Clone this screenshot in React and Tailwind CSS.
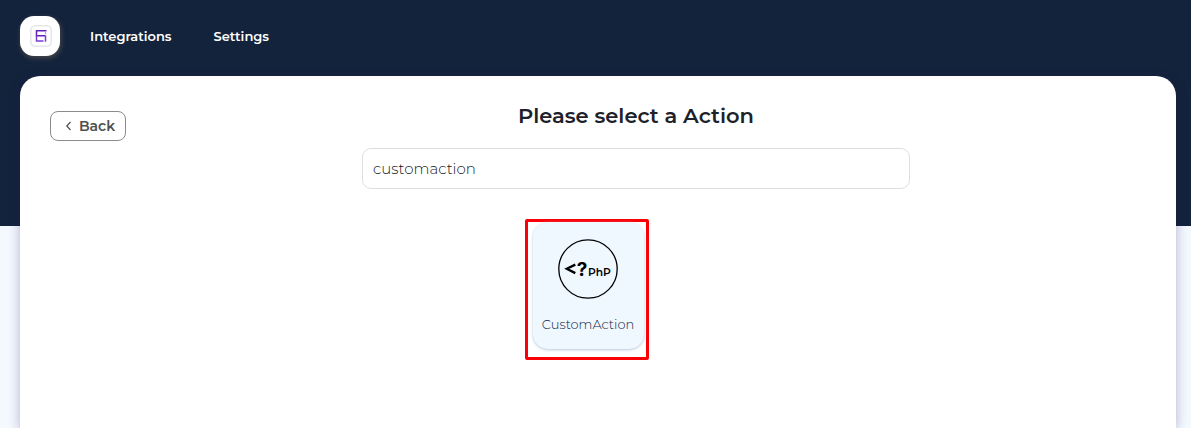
import React, { useState } from "react";

function Logo() {
  return (
    <svg viewBox="0 0 22 22" className="size-[22px]" fill="none" aria-hidden="true">
      <rect x="0.75" y="0.75" width="20.5" height="20.5" rx="4.5" stroke="#e6e6e8" strokeWidth="1.5" />
      <path d="M16.5 5.8H6.5V10.8H15.5" stroke="#6420b8" strokeWidth="1.5" />
      <path d="M15.5 10.8V16.8M6.5 10.8V16H13.5" stroke="#7a3bd8" strokeWidth="1.5" />
      <path d="M15.5 6.5V9.5" stroke="#c4a4f2" strokeWidth="1.3" />
    </svg>
  );
}

function PhpIcon() {
  return (
    <svg viewBox="0 0 60 60" className="size-[60px]" aria-hidden="true">
      <circle cx="30" cy="30" r="29.2" fill="none" stroke="#000" strokeWidth="1.3" />
      <path d="M17.3 25.6L8.8 29.8L17.3 34.1" fill="none" stroke="#000" strokeWidth="2.3" />
      <text x="18.8" y="36.5" fontSize="19" fontWeight="700" fontFamily="Inter, sans-serif">?</text>
      <text x="30" y="37" fontSize="10.7" fontWeight="600" fontFamily="Montserrat, Inter, sans-serif">PhP</text>
    </svg>
  );
}

export default function App() {
  const [query, setQuery] = useState("customaction");
  return (
    <div className="flex min-h-screen flex-col bg-[linear-gradient(#14233c_226px,#f4f8ff_226px)] font-[Montserrat,Inter,sans-serif]">
      <header className="flex items-center px-5 py-4">
        <a href="#" aria-label="Home" className="flex size-10 items-center justify-center rounded-[14px] bg-white pl-[2px] shadow-[1px_2px_5px_#4a4a4a]">
          <Logo />
        </a>
        <nav className="ml-[30px] flex gap-[42px] pt-px text-[13px] font-semibold text-white">
          <a href="#integrations">Integrations</a>
          <a href="#settings">Settings</a>
        </nav>
      </header>
      <main className="mt-1 mr-[15px] ml-5 flex-1 rounded-t-[20px] bg-white px-[30px] pt-[25px] shadow-[0_2px_12px_rgba(30,20,80,0.3)]">
        <div className="flex items-start">
          <button className="mt-[10px] flex h-[30px] w-[76px] items-center justify-center gap-1 rounded-lg border border-[#8c8c8c] pl-[2px] text-sm font-semibold text-[#505050]">
            <svg viewBox="0 0 12 12" className="size-3" fill="none" stroke="currentColor" strokeWidth="1.2" aria-hidden="true">
              <path d="M7.5 2L3.8 6L7.5 10" />
            </svg>
            Back
          </button>
          <div className="flex flex-1 flex-col items-center">
            <h1 className="text-[21px] leading-[30px] font-semibold text-[#1d2129]">Please select a Action</h1>
            <input
              type="text"
              aria-label="Search actions"
              value={query}
              onChange={(e) => setQuery(e.target.value)}
              className="mt-[17px] h-[41px] w-full max-w-[548px] rounded-[9px] border border-[#dfdfdf] bg-white px-[10px] text-[15px] font-light text-[#14181b] outline-none"
            />
          </div>
        </div>
        <div className="mt-[30px] flex justify-center pr-[22px]">
          <div className="rounded-[2px] border-[3px] border-[#fa0007] pr-[2px] pb-2 pl-[5px]">
            <button className="flex h-[127px] w-[111px] flex-col items-center rounded-[15px] bg-[#eff7ff] pt-[17px] pr-px text-[#10263f] shadow-[0_1px_3px_#b9c8dc]">
              <PhpIcon />
              <span className="mt-[15px] text-[13px] leading-5 font-light">CustomAction</span>
            </button>
          </div>
        </div>
      </main>
    </div>
  );
}
